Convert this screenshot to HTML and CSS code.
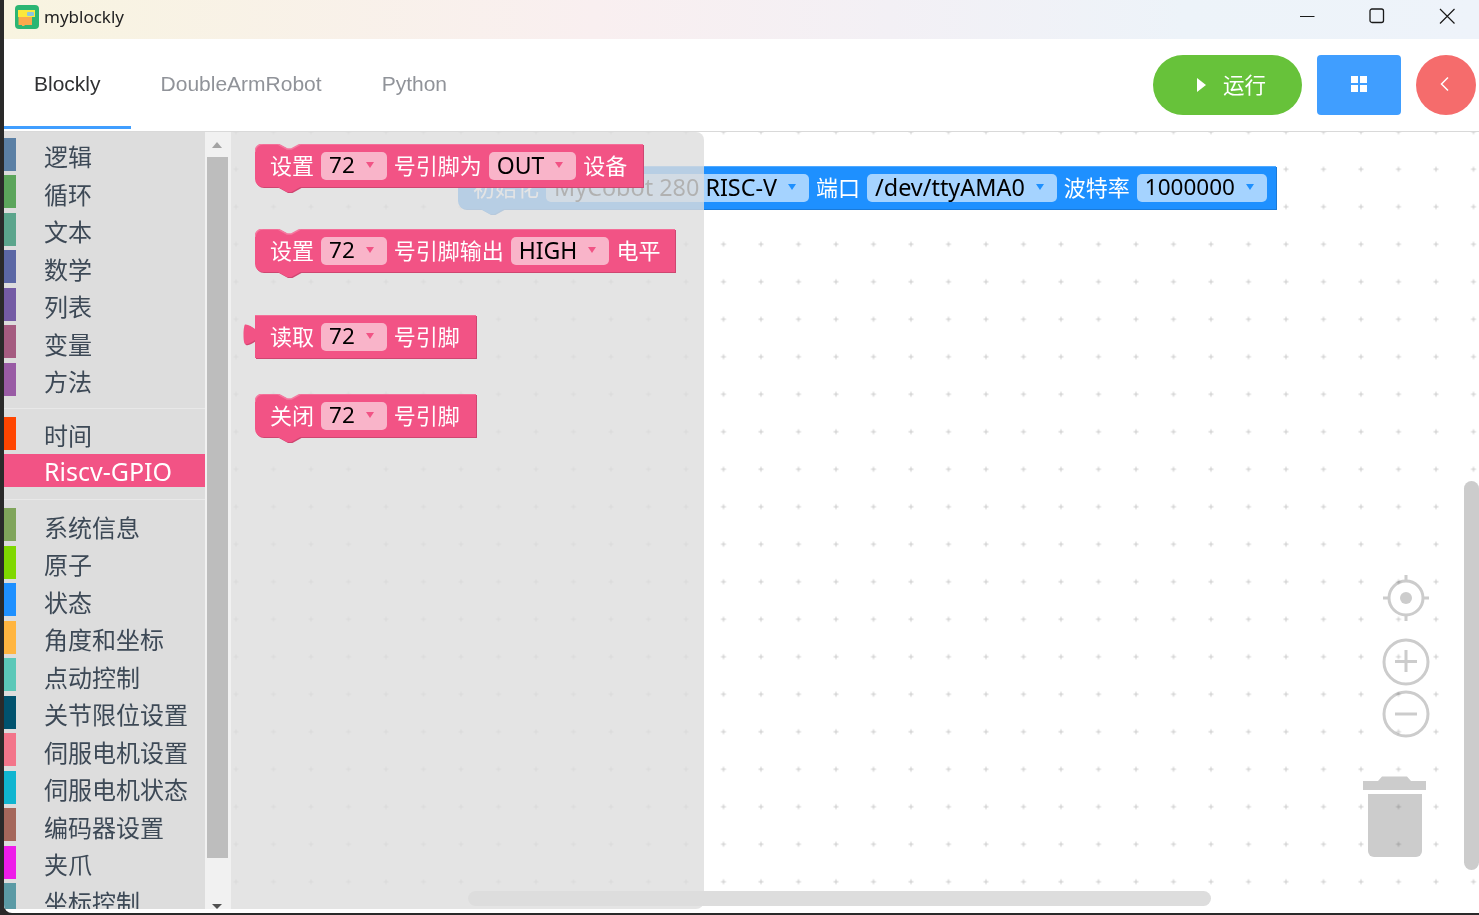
FILE: index.html
```html
<!DOCTYPE html>
<html>

<head>
    <title>myblockly</title>
    <link rel="stylesheet" href="styles.css">
</head>

<body>
    <div class="window">
        <div class="titlebar">
            <svg class="app-logo" width="24" height="24" viewBox="0 0 24 24">
                <rect width="24" height="24" rx="4" fill="#2bb673" />
                <path d="M3 5h17v7H3z" fill="#fbe83c" />
                <path d="M3.500 12h13.500v8H9.500v1H7v-1H3.500z" fill="#fba94c" />
                <rect x="12" y="7" width="7" height="4" rx="1" fill="#8cc6dc" />
            </svg>
            <span class="app-name">myblockly</span>
            <div class="window-controls">
                <svg width="16" height="16" viewBox="0 0 16 16">
                    <path d="M1 8.500h14.500" stroke="#1a1a1a" stroke-width="1" />
                </svg>
                <svg width="16" height="16" viewBox="0 0 16 16">
                    <rect x="1" y="1" width="13.500" height="13.500" rx="2" fill="none" stroke="#1a1a1a" stroke-width="1.300" />
                </svg>
                <svg width="16" height="16" viewBox="0 0 16 16">
                    <path d="M1 1l14.500 14.500M15.500 1L1 15.500" stroke="#1a1a1a" stroke-width="1.200" />
                </svg>
            </div>
        </div>

        <div class="header">
            <div class="tabs">
                <div class="tab active">Blockly</div>
                <div class="tab">DoubleArmRobot</div>
                <div class="tab">Python</div>
            </div>
            <div class="actions">
                <button class="btn btn-run">
                    <svg width="9" height="14" viewBox="0 0 9 14">
                        <path d="M0 0l9 7-9 7z" fill="#fff" />
                    </svg>
                    <span>运行</span>
                </button>
                <button class="btn btn-grid">
                    <svg width="16" height="16" viewBox="0 0 16 16" fill="#fff">
                        <rect width="7" height="7" />
                        <rect x="9" width="7" height="7" />
                        <rect y="9" width="7" height="7" />
                        <rect x="9" y="9" width="7" height="7" />
                    </svg>
                </button>
                <button class="btn btn-back">
                    <svg width="10" height="16" viewBox="0 0 10 16">
                        <path d="M8 1.500L1.500 8 8 14.500" fill="none" stroke="#fff" stroke-width="1.500" />
                    </svg>
                </button>
            </div>
        </div>

        <div class="main">
            <div class="toolbox">
                <div class="cat"><i class="c-logic"></i>逻辑</div>
                <div class="cat"><i class="c-loop"></i>循环</div>
                <div class="cat"><i class="c-text"></i>文本</div>
                <div class="cat"><i class="c-math"></i>数学</div>
                <div class="cat"><i class="c-list"></i>列表</div>
                <div class="cat"><i class="c-var"></i>变量</div>
                <div class="cat"><i class="c-func"></i>方法</div>
                <div class="sep"></div>
                <div class="cat"><i class="c-time"></i>时间</div>
                <div class="cat selected"><i class="c-gpio"></i>Riscv-GPIO</div>
                <div class="sep"></div>
                <div class="cat"><i class="c-sys"></i>系统信息</div>
                <div class="cat"><i class="c-atom"></i>原子</div>
                <div class="cat"><i class="c-state"></i>状态</div>
                <div class="cat"><i class="c-angle"></i>角度和坐标</div>
                <div class="cat"><i class="c-jog"></i>点动控制</div>
                <div class="cat"><i class="c-limit"></i>关节限位设置</div>
                <div class="cat"><i class="c-servo"></i>伺服电机设置</div>
                <div class="cat"><i class="c-servostate"></i>伺服电机状态</div>
                <div class="cat"><i class="c-encoder"></i>编码器设置</div>
                <div class="cat"><i class="c-gripper"></i>夹爪</div>
                <div class="cat"><i class="c-coord"></i>坐标控制</div>
            </div>

            <div class="toolbox-scroll">
                <div class="arrow-up"></div>
                <div class="scroll-thumb"></div>
                <div class="arrow-down"></div>
            </div>

            <div class="workspace">
                <svg class="grid" width="100%" height="100%">
                    <defs>
                        <pattern id="dots" x="-13.750" y="-19" width="37.500" height="37.500" patternUnits="userSpaceOnUse">
                            <path d="M16.250 18.750h5M18.750 16.250v5" stroke="#ccc" stroke-width="1" />
                        </pattern>
                    </defs>
                    <rect width="100%" height="100%" fill="url(#dots)" />
                </svg>

                <!-- block left on the canvas, sits under the flyout -->
                <div class="block blue block-init">
                    <svg class="shape" width="821" height="51">
                        <path class="fill" d="M0 8A8 8 0 0 1 8 0H23l9 5h4.500l9-5H818V43H45.500l-9 5H32l-9-5H8A8 8 0 0 1 0 35z" />
                        <path class="light" d="M0 8A8 8 0 0 1 8 0H23l9 5h4.500l9-5H818" />
                    </svg>
                    <span>初始化</span>
                    <span class="field wide">MyCobot 280 RISC-V<i></i></span>
                    <span>端口</span>
                    <span class="field wide">/dev/ttyAMA0<i></i></span>
                    <span>波特率</span>
                    <span class="field num">1000000<i></i></span>
                </div>

                <div class="hscroll"></div>
                <div class="vscroll"></div>

                <div class="flyout">
                    <div class="block pink block-mode">
                        <svg class="shape" width="392" height="51">
                            <path class="fill" d="M0 8A8 8 0 0 1 8 0H23l9 5h4.500l9-5H388V43H45.500l-9 5H32l-9-5H8A8 8 0 0 1 0 35z" />
                            <path class="light" d="M0 8A8 8 0 0 1 8 0H23l9 5h4.500l9-5H388" />
                        </svg>
                        <span>设置</span>
                        <span class="field num">72<i></i></span>
                        <span>号引脚为</span>
                        <span class="field">OUT<i></i></span>
                        <span>设备</span>
                    </div>

                    <div class="block pink block-write">
                        <svg class="shape" width="424" height="51">
                            <path class="fill" d="M0 8A8 8 0 0 1 8 0H23l9 5h4.500l9-5H420V43H45.500l-9 5H32l-9-5H8A8 8 0 0 1 0 35z" />
                            <path class="light" d="M0 8A8 8 0 0 1 8 0H23l9 5h4.500l9-5H420" />
                        </svg>
                        <span>设置</span>
                        <span class="field num">72<i></i></span>
                        <span>号引脚输出</span>
                        <span class="field">HIGH<i></i></span>
                        <span>电平</span>
                    </div>

                    <div class="block pink block-read">
                        <svg class="shape shape-tab" width="238" height="46">
                            <path class="fill" d="M12 0H233V43H12V25C9 27 5 30 2 29C0 28 0 12 2 9.500C5 9 9 12 12 14z" />
                            <path class="light" d="M12 0H233" />
                        </svg>
                        <span>读取</span>
                        <span class="field num">72<i></i></span>
                        <span>号引脚</span>
                    </div>

                    <div class="block pink block-close">
                        <svg class="shape" width="225" height="51">
                            <path class="fill" d="M0 8A8 8 0 0 1 8 0H23l9 5h4.500l9-5H221V43H45.500l-9 5H32l-9-5H8A8 8 0 0 1 0 35z" />
                            <path class="light" d="M0 8A8 8 0 0 1 8 0H23l9 5h4.500l9-5H221" />
                        </svg>
                        <span>关闭</span>
                        <span class="field num">72<i></i></span>
                        <span>号引脚</span>
                    </div>
                </div>

                <svg class="tool tool-center" width="48" height="48" viewBox="0 0 48 48">
                    <circle cx="24" cy="24" r="17" fill="none" stroke="#ccc" stroke-width="3" />
                    <circle cx="24" cy="24" r="6" fill="#ccc" />
                    <path d="M24 1v7M24 40v7M1 24h6M41 24h6" stroke="#ccc" stroke-width="3" />
                </svg>
                <svg class="tool tool-plus" width="48" height="48" viewBox="0 0 48 48">
                    <circle cx="24" cy="24" r="22" fill="none" stroke="#ccc" stroke-width="3" />
                    <path d="M24 12v22M13 23.500h22" stroke="#ccc" stroke-width="3" />
                </svg>
                <svg class="tool tool-minus" width="48" height="48" viewBox="0 0 48 48">
                    <circle cx="24" cy="24" r="22" fill="none" stroke="#ccc" stroke-width="3" />
                    <path d="M13 24h22" stroke="#ccc" stroke-width="3" />
                </svg>
                <svg class="tool tool-trash" width="64" height="82" viewBox="0 0 64 82">
                    <path d="M0 5h15l4-4.500h25l4 4.500h15v9H0z" fill="#ccc" />
                    <path d="M5 18h54v57a6 6 0 0 1-6 6H11a6 6 0 0 1-6-6z" fill="#ccc" />
                </svg>
            </div>
        </div>
    </div>
</body>

</html>
```

FILE: styles.css
```css
body {
    margin: 0;
    height: 915px;
    overflow: hidden;
    background-color: #2a2a2a;
    font-family: "Noto Sans", "Noto Sans CJK SC", sans-serif;
}

.window {
    margin-left: 4px;
    height: 913px;
    background-color: #fff;
    border-bottom-left-radius: 8px;
    overflow: hidden;
    display: flex;
    flex-direction: column;
}

/* title bar */
.titlebar {
    flex: none;
    height: 39px;
    display: flex;
    align-items: center;
    background: linear-gradient(90deg, #f8f4e0 0%, #f9eff0 40%, #f3f0f5 60%, #edf3f9 80%, #eef3fa 100%);
}

.app-logo {
    margin: 0 5px 6px 11px;
}

.app-name {
    font-size: 17px;
    color: #222;
    margin-bottom: 6px;
}

.window-controls {
    margin-left: auto;
    margin-bottom: 7px;
    padding-right: 24px;
    display: flex;
    gap: 54px;
}

/* tabs + buttons */
.header {
    flex: none;
    box-sizing: border-box;
    height: 93px;
    border-bottom: 1px solid #d9d9d9;
    display: flex;
    justify-content: space-between;
}

.tabs {
    display: flex;
    align-items: flex-start;
}

.tab {
    padding: 3px 30px 0;
    line-height: 84px;
    border-bottom: 3px solid transparent;
    font-family: "Liberation Sans", Arial, sans-serif;
    font-size: 21px;
    color: #909399;
}

.tab.active {
    color: #303133;
    border-bottom-color: #409eff;
}

.actions {
    display: flex;
    align-items: center;
    gap: 15px;
    padding: 0 3px 0 0;
}

.btn {
    height: 60px;
    border: none;
    padding: 0;
    color: #fff;
    display: flex;
    align-items: center;
    justify-content: center;
}

.btn-run {
    width: 149px;
    padding-left: 8px;
    border-radius: 30px;
    background-color: #67c23a;
    gap: 17px;
    font-family: "Noto Sans CJK SC", sans-serif;
    font-size: 21.500px;
}

.btn-run span {
    padding-bottom: 4px;
}

.btn-grid {
    width: 84px;
    padding-bottom: 2px;
    border-radius: 4px;
    background-color: #409eff;
}

.btn-back {
    width: 60px;
    padding: 0 2px 2px 0;
    border-radius: 50%;
    background-color: #f56c6c;
}

/* main area */
.main {
    flex: none;
    height: 777px;
    display: flex;
}

.toolbox {
    flex: none;
    box-sizing: border-box;
    width: 201px;
    padding-top: 5.900px;
    background-color: #ddd;
    overflow: hidden;
    font-size: 24px;
    color: #3d4956;
}

.cat {
    height: 33px;
    margin-bottom: 4.500px;
    display: flex;
    align-items: center;
    line-height: 33px;
    padding-top: 5.200px;
    box-sizing: border-box;
    position: relative;
    padding-left: 40px;
    white-space: nowrap;
}

.cat i {
    position: absolute;
    left: 0;
    top: 0;
    width: 12px;
    height: 33px;
}

.cat.selected {
    background-color: #f25385;
    color: #fff;
    font-size: 25px;
    padding-top: 2.200px;
}

.sep {
    height: 1px;
    margin: 12px 0 8px;
    background-color: #e8e8e8;
}

.c-logic { background-color: #5b80a5; }
.c-loop { background-color: #5ba55b; }
.c-text { background-color: #5ba58c; }
.c-math { background-color: #5b67a5; }
.c-list { background-color: #745ba5; }
.c-var { background-color: #a55b80; }
.c-func { background-color: #995ba5; }
.c-time { background-color: #ff4500; }
.c-gpio { background-color: #f25385; }
.c-sys { background-color: #80a55b; }
.c-atom { background-color: #7fd800; }
.c-state { background-color: #1e90ff; }
.c-angle { background-color: #ffb540; }
.c-jog { background-color: #5bc8b8; }
.c-limit { background-color: #00526e; }
.c-servo { background-color: #f3758a; }
.c-servostate { background-color: #10b5d0; }
.c-encoder { background-color: #a5675b; }
.c-gripper { background-color: #ee1ce9; }
.c-coord { background-color: #5b9aa5; }

.toolbox-scroll {
    flex: none;
    width: 26px;
    background-color: #f1f1f1;
    position: relative;
}

.scroll-thumb {
    position: absolute;
    left: 2px;
    top: 25px;
    width: 21px;
    height: 701px;
    background-color: #bdbdbd;
}

.arrow-up,
.arrow-down {
    position: absolute;
    left: 7px;
    width: 0;
    height: 0;
    border-left: 5.500px solid transparent;
    border-right: 5.500px solid transparent;
}

.arrow-up {
    top: 10px;
    border-bottom: 6px solid #a3a3a3;
}

.arrow-down {
    bottom: 0;
    border-top: 5px solid #505050;
}

.workspace {
    flex: 1;
    position: relative;
    overflow: hidden;
    background-color: #fff;
}

.grid {
    position: absolute;
    left: 0;
    top: 0;
}

.flyout {
    position: absolute;
    left: 0;
    top: 0;
    width: 473px;
    height: 777px;
    background-color: rgba(221, 221, 221, 0.8);
    border-radius: 0 8px 8px 0;
}

.hscroll {
    position: absolute;
    left: 237px;
    top: 759px;
    width: 743px;
    height: 15px;
    border-radius: 8px;
    background-color: #ddd;
}

.vscroll {
    position: absolute;
    right: 0;
    top: 349px;
    width: 15px;
    height: 389px;
    border-radius: 8px;
    background-color: #ccc;
}

/* blocks */
.block {
    position: absolute;
    height: 44px;
    box-sizing: border-box;
    display: flex;
    align-items: center;
    gap: 7px;
    padding: 0 16px 1px 15px;
    font-size: 22px;
    line-height: 28px;
    color: #fff;
    white-space: nowrap;
}

.block span {
    position: relative;
    top: -1px;
}

.shape {
    position: absolute;
    left: 0;
    top: 0;
    filter: drop-shadow(1px 1px 0 var(--dark));
}

.shape .fill {
    fill: var(--main);
}

.shape .light {
    fill: none;
    stroke: var(--light);
    stroke-width: 1.500px;
}

.shape-tab {
    left: -12px;
}

.pink {
    --main: #f25385;
    --light: #f5789f;
    --dark: #ce4671;
}

.blue {
    --main: #1e90ff;
    --light: #62b1ff;
    --dark: #1a7ad9;
}

.block .field {
    top: 0;
    height: 28px;
    display: flex;
    align-items: center;
    padding: 0 13px 2px 8px;
    box-sizing: border-box;
    border-radius: 5px;
    font-size: 23px;
    color: #000;
}

.block .field.wide {
    font-size: 23.400px;
}

.block .field.num {
    font-size: 22.500px;
}

.pink .field {
    background-color: #f9b4c9;
}

.blue .field {
    background-color: #a5d3ff;
}

.field i {
    width: 0;
    height: 0;
    margin-left: 11px;
    border-left: 4px solid transparent;
    border-right: 4px solid transparent;
    border-top: 6.500px solid var(--main);
}

.block-init {
    left: 227px;
    top: 34px;
    width: 819px;
}

.block-mode {
    left: 24px;
    top: 12px;
    width: 389px;
}

.block-write {
    left: 24px;
    top: 97px;
    width: 421px;
}

.block-read {
    left: 24px;
    top: 183px;
    width: 222px;
}

.block-close {
    left: 24px;
    top: 262px;
    width: 222px;
}

/* workspace controls */
.tool {
    position: absolute;
    mix-blend-mode: multiply;
}

.tool-center {
    left: 1151px;
    top: 442px;
}

.tool-plus {
    left: 1151px;
    top: 506px;
}

.tool-minus {
    left: 1151px;
    top: 558px;
}

.tool-trash {
    left: 1132px;
    top: 644px;
}
```
